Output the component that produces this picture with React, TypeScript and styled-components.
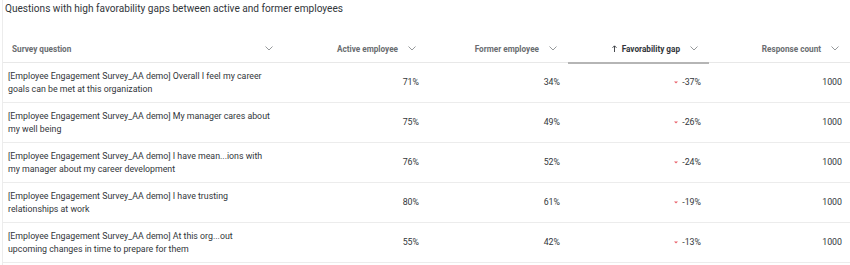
import React from 'react';
import styled, { createGlobalStyle } from 'styled-components';

const GlobalStyle = createGlobalStyle`
  html, body {
    margin: 0;
    padding: 0;
    background: #ffffff;
  }
  body {
    font-family: Roboto, "Liberation Sans", Arial, sans-serif;
    color: #32363a;
  }
`;

const Page = styled.div`
  width: 850px;
  height: 265px;
  overflow: hidden;
  padding-left: 2px;
  box-sizing: border-box;
`;

const Card = styled.div`
  border-left: 1px solid #ececec;
  height: 100%;
`;

const Title = styled.div`
  font-size: 10.1px;
  line-height: 16px;
  padding: 1px 0 0 2px;
  color: #32363a;
`;

const Table = styled.div`
  display: grid;
  grid-template-columns: minmax(0, 1fr) repeat(4, 141px);
  margin-top: 18px;
`;

const HeaderCell = styled.div<{ $sorted?: boolean; $first?: boolean }>`
  height: 27px;
  display: flex;
  align-items: center;
  justify-content: ${p => (p.$first ? 'space-between' : 'flex-end')};
  gap: 10px;
  padding: ${p => (p.$first ? '0 13px 0 9px' : '0 11px 0 8px')};
  border-bottom: ${p => (p.$sorted ? '2px solid #b5b5b5' : '1px solid #e8e8e8')};
  margin-bottom: ${p => (p.$sorted ? '-1px' : '0')};
  font-size: 8.2px;
  font-weight: bold;
  color: #6a6d70;
  white-space: nowrap;
`;

const HeaderLabel = styled.span`
  display: flex;
  align-items: center;
  gap: 5px;
`;

const Cell = styled.div<{ $first?: boolean }>`
  height: 39px;
  display: flex;
  align-items: center;
  justify-content: ${p => (p.$first ? 'flex-start' : 'flex-end')};
  padding: ${p => (p.$first ? '0 0 0 5px' : '0 8px 0 0')};
  border-bottom: 1px solid #ececec;
  font-size: 8.8px;
  line-height: 13px;
  color: #32363a;
  white-space: nowrap;
`;

const Question = styled.div`
  display: flex;
  flex-direction: column;
`;

const Gap = styled.span`
  display: flex;
  align-items: center;
  gap: 4px;
`;

const Chevron = () => (
  <svg width="8" height="5" viewBox="0 0 8 5" fill="none">
    <path d="M0.5 0.5 L4 4 L7.5 0.5" stroke="#8a8d90" strokeWidth="0.9" />
  </svg>
);

const SortArrow = () => (
  <svg width="5" height="7" viewBox="0 0 5 7" fill="none">
    <path d="M2.5 7 V1 M0.5 2.8 L2.5 0.8 L4.5 2.8" stroke="#32363a" strokeWidth="0.9" />
  </svg>
);

const DownMark = () => (
  <svg width="4" height="3" viewBox="0 0 4 3">
    <path d="M0 0.5 H4 L2 2.5 Z" fill="#e9606b" />
  </svg>
);

interface Row {
  lines: string[];
  active: string;
  former: string;
  gap: string;
  count: string;
}

const rows: Row[] = [
  {
    lines: ['[Employee Engagement Survey_AA demo] Overall I feel my career', 'goals can be met at this organization'],
    active: '71%', former: '34%', gap: '-37%', count: '1000',
  },
  {
    lines: ['[Employee Engagement Survey_AA demo] My manager cares about', 'my well being'],
    active: '75%', former: '49%', gap: '-26%', count: '1000',
  },
  {
    lines: ['[Employee Engagement Survey_AA demo] I have mean...ions with', 'my manager about my career development'],
    active: '76%', former: '52%', gap: '-24%', count: '1000',
  },
  {
    lines: ['[Employee Engagement Survey_AA demo] I have trusting', 'relationships at work'],
    active: '80%', former: '61%', gap: '-19%', count: '1000',
  },
  {
    lines: ['[Employee Engagement Survey_AA demo] At this org...out', 'upcoming changes in time to prepare for them'],
    active: '55%', former: '42%', gap: '-13%', count: '1000',
  },
];

export default function App() {
  return (
    <Page>
      <GlobalStyle />
      <Card>
        <Title>Questions with high favorability gaps between active and former employees</Title>
        <Table>
          <HeaderCell $first>
            <span>Survey question</span>
            <Chevron />
          </HeaderCell>
          <HeaderCell>
            <span>Active employee</span>
            <Chevron />
          </HeaderCell>
          <HeaderCell>
            <span>Former employee</span>
            <Chevron />
          </HeaderCell>
          <HeaderCell $sorted>
            <HeaderLabel>
              <SortArrow />
              <span style={{ color: '#32363a' }}>Favorability gap</span>
            </HeaderLabel>
            <Chevron />
          </HeaderCell>
          <HeaderCell>
            <span>Response count</span>
            <Chevron />
          </HeaderCell>

          {rows.map((r, i) => (
            <React.Fragment key={i}>
              <Cell $first>
                <Question>
                  {r.lines.map((l, j) => (
                    <span key={j}>{l}</span>
                  ))}
                </Question>
              </Cell>
              <Cell>{r.active}</Cell>
              <Cell>{r.former}</Cell>
              <Cell>
                <Gap>
                  <DownMark />
                  {r.gap}
                </Gap>
              </Cell>
              <Cell>{r.count}</Cell>
            </React.Fragment>
          ))}
        </Table>
      </Card>
    </Page>
  );
}
